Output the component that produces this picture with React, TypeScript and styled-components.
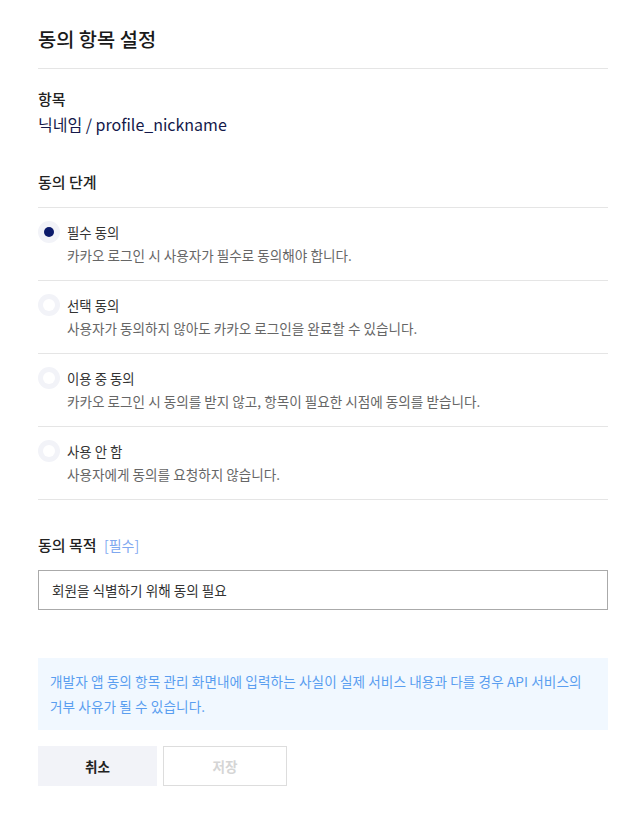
import React, { useState } from 'react';
import styled, { createGlobalStyle } from 'styled-components';

const GlobalStyle = createGlobalStyle`
  body {
    margin: 0;
    background: #fff;
    font-family: 'Noto Sans CJK KR', 'Noto Sans', sans-serif;
    color: #222;
  }
`;

const options = [
  { id: 'required', label: '필수 동의', desc: '카카오 로그인 시 사용자가 필수로 동의해야 합니다.' },
  { id: 'optional', label: '선택 동의', desc: '사용자가 동의하지 않아도 카카오 로그인을 완료할 수 있습니다.' },
  { id: 'inuse', label: '이용 중 동의', desc: '카카오 로그인 시 동의를 받지 않고, 항목이 필요한 시점에 동의를 받습니다.' },
  { id: 'none', label: '사용 안 함', desc: '사용자에게 동의를 요청하지 않습니다.' },
];

export default function App() {
  const [selected, setSelected] = useState('required');
  return (
    <Page>
      <GlobalStyle />
      <Title>동의 항목 설정</Title>
      <Section>
        <Label>항목</Label>
        <Value>닉네임 / profile_nickname</Value>
      </Section>
      <StepLabel>동의 단계</StepLabel>
      <OptionList>
        {options.map((o) => (
          <Option key={o.id} onClick={() => setSelected(o.id)}>
            <Radio $checked={selected === o.id} />
            <OptionText>
              <OptionTitle>{o.label}</OptionTitle>
              <OptionDesc>{o.desc}</OptionDesc>
            </OptionText>
          </Option>
        ))}
      </OptionList>
      <PurposeLabel>
        동의 목적 <Required>[필수]</Required>
      </PurposeLabel>
      <Input defaultValue="회원을 식별하기 위해 동의 필요" />
      <Notice>
        개발자 앱 동의 항목 관리 화면내에 입력하는 사실이 실제 서비스 내용과 다를 경우 API 서비스의
        거부 사유가 될 수 있습니다.
      </Notice>
      <Buttons>
        <CancelButton>취소</CancelButton>
        <SaveButton disabled>저장</SaveButton>
      </Buttons>
    </Page>
  );
}

const Page = styled.div`
  width: 570px;
  padding: 24px 30px 30px 38px;
`;

const Title = styled.h1`
  margin: 0;
  font-size: 19.8px;
  font-weight: 500;
  line-height: 30px;
  padding-bottom: 14px;
  border-bottom: 1px solid #e5e5e5;
  color: #1a1a1a;
`;

const Section = styled.div`
  padding-top: 18px;
`;

const Label = styled.div`
  font-size: 15px;
  font-weight: 500;
  line-height: 24px;
  color: #222;
`;

const Value = styled.div`
  font-size: 16px;
  line-height: 27px;
  color: #14194a;
`;

const StepLabel = styled.div`
  margin-top: 32px;
  font-size: 15px;
  font-weight: 500;
  line-height: 24px;
  padding-bottom: 13px;
  border-bottom: 1px solid #e5e5e5;
  color: #222;
`;

const OptionList = styled.div`
  display: flex;
  flex-direction: column;
`;

const Option = styled.div`
  display: flex;
  align-items: flex-start;
  gap: 7px;
  height: 73px;
  padding-top: 13px;
  box-sizing: border-box;
  border-bottom: 1px solid #e5e5e5;
  cursor: pointer;
`;

const Radio = styled.span<{ $checked: boolean }>`
  flex: none;
  width: 22px;
  height: 22px;
  border-radius: 50%;
  background: #f2f3f8;
  display: flex;
  align-items: center;
  justify-content: center;
  &::after {
    content: '';
    width: ${({ $checked }) => ($checked ? '10px' : '12px')};
    height: ${({ $checked }) => ($checked ? '10px' : '12px')};
    border-radius: 50%;
    background: ${({ $checked }) => ($checked ? '#0b1a6a' : '#fff')};
  }
`;

const OptionText = styled.div`
  display: flex;
  flex-direction: column;
`;

const OptionTitle = styled.div`
  font-size: 13.4px;
  line-height: 22px;
  color: #333;
`;

const OptionDesc = styled.div`
  font-size: 13.6px;
  line-height: 25px;
  color: #666;
`;

const PurposeLabel = styled.div`
  margin-top: 33px;
  font-size: 15px;
  font-weight: 500;
  line-height: 24px;
  color: #222;
`;

const Required = styled.span`
  margin-left: 4px;
  font-size: 14px;
  font-weight: 400;
  color: #7fa8f0;
`;

const Input = styled.input`
  display: block;
  margin-top: 13px;
  width: 100%;
  height: 40px;
  box-sizing: border-box;
  border: 1px solid #aaa;
  padding: 0 13px;
  font-family: inherit;
  font-size: 13.6px;
  color: #333;
  outline: none;
`;

const Notice = styled.div`
  margin-top: 48px;
  background: #f1f8ff;
  padding: 11px 12px;
  font-size: 13.6px;
  letter-spacing: 0.1px;
  line-height: 25px;
  word-break: keep-all;
  color: #5a9ef0;
`;

const Buttons = styled.div`
  display: flex;
  gap: 6px;
  margin-top: 16px;
`;

const CancelButton = styled.button`
  width: 119px;
  height: 40px;
  border: none;
  background: #f2f3f8;
  font-family: inherit;
  font-size: 13.6px;
  font-weight: 700;
  color: #222;
  cursor: pointer;
`;

const SaveButton = styled.button`
  width: 124px;
  height: 40px;
  border: 1px solid #ddd;
  background: #fff;
  font-family: inherit;
  font-size: 13.6px;
  font-weight: 700;
  color: #d5d5d5;
`;
